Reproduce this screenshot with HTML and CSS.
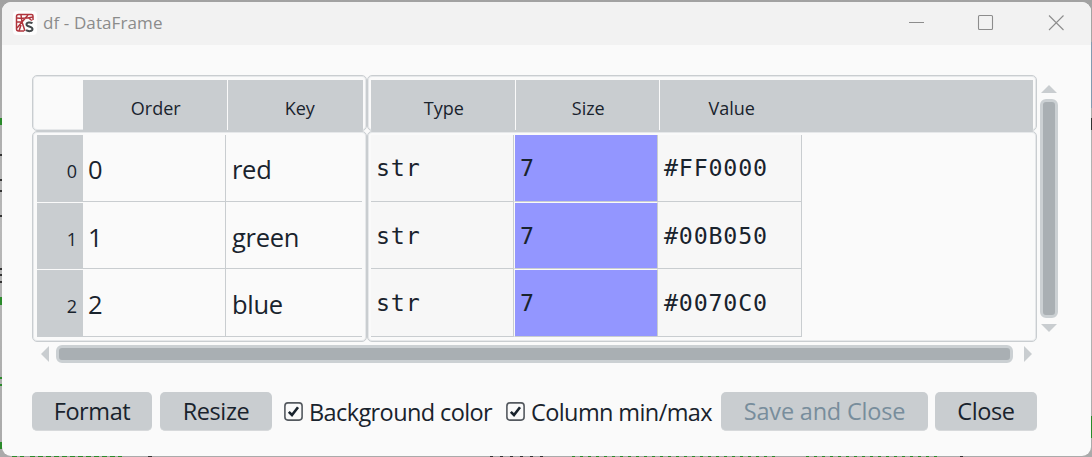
FILE: index.html
```html
<!DOCTYPE html>
<html lang="en">
<head>
<meta charset="utf-8">
<title>df - DataFrame</title>
<link rel="stylesheet" href="styles.css">
</head>
<body>
<div class="desktop">
<main class="window">
  <header class="titlebar">
    <svg class="logo" width="24" height="24" viewBox="0 0 24 24"><rect width="24" height="24" rx="4" fill="#fdfdfd"/><g fill="none" stroke="#b0343c" stroke-width="1.500"><path d="M20 9V5Q20 3.500 18.500 3.500H5.500Q3.500 3.500 3.500 5.500V18Q3.500 20 5.500 20H11"/><path d="M4 7Q12 8 20 6M8 4L9 11L4 17M9 11L15 4M9 11L12 20M6 20L8 14M16 7L19 10M4 11L9 11"/></g><path d="M19.500 12.200C17 10.800 13.500 11.300 13.500 13.400C13.500 15.800 19.500 15.100 19.500 18C19.500 20.500 15.500 20.700 13 19.200" fill="none" stroke="#fff" stroke-width="4"/><path d="M19.500 12.200C17 10.800 13.500 11.300 13.500 13.400C13.500 15.800 19.500 15.100 19.500 18C19.500 20.500 15.500 20.700 13 19.200" fill="none" stroke="#44494c" stroke-width="2"/></svg>
    <h1 class="title">df - DataFrame</h1>
    <svg class="controls" width="158" height="18" viewBox="0 0 158 18" fill="none" stroke="#8d8d8d" stroke-width="1.100"><path d="M1 8.500H16M141 1.500L155.500 16M155.500 1.500L141 16"/><rect x="70.500" y="1.500" width="14" height="14" rx="1"/></svg>
  </header>
  <section class="viewer">
    <div class="frames">
      <div class="frame head head-index">
        <div class="corner"></div><div class="th">Order</div><div class="th key">Key</div>
      </div>
      <div class="frame head head-data">
        <div class="th">Type</div><div class="th">Size</div><div class="th value">Value</div><div class="th last"></div>
      </div>
      <div class="frame body body-index">
        <div class="labels"><div>0</div><div>1</div><div>2</div></div>
        <div class="cells index-cells">
          <div>0</div><div>red</div><div>1</div><div>green</div><div>2</div><div>blue</div>
        </div>
      </div>
      <div class="frame body body-data">
        <div class="cells data-cells">
          <div>str</div><div class="size">7</div><div>#FF0000</div>
          <div>str</div><div class="size">7</div><div>#00B050</div>
          <div>str</div><div class="size">7</div><div>#0070C0</div>
        </div>
      </div>
    </div>
    <div class="scroll vertical"><i class="arrow up"></i><i class="thumb"></i><i class="arrow down"></i></div>
    <div class="scroll horizontal"><i class="arrow left"></i><i class="thumb"></i><i class="arrow right"></i></div>
  </section>
  <footer class="actions">
    <button class="btn format">Format</button>
    <button class="btn resize">Resize</button>
    <label class="check bg"><svg width="19" height="19" viewBox="0 0 19 19" fill="none"><rect x=".9" y=".9" width="17.200" height="17.200" rx="3" stroke="#54595f" stroke-width="1.600"/><path d="M4.800 9.800L8 13L14 5.200" stroke="#19232d" stroke-width="2.600"/></svg><span>Background color</span></label>
    <label class="check minmax"><svg width="19" height="19" viewBox="0 0 19 19" fill="none"><rect x=".9" y=".9" width="17.200" height="17.200" rx="3" stroke="#54595f" stroke-width="1.600"/><path d="M4.800 9.800L8 13L14 5.200" stroke="#19232d" stroke-width="2.600"/></svg><span>Column min/max</span></label>
    <button class="btn save" disabled>Save and Close</button>
    <button class="btn close">Close</button>
  </footer>
</main>
<svg class="fringe" width="1092" height="457" viewBox="0 0 1092 457" fill="none"><path d="M1 118V125M1 377V379M1 384V386M1 442V449M1 297V305" stroke="#2a8a2a" stroke-width="2"/><path d="M1 154V156M1 179V181M1 190V192M1 215V217M1 268V270M1 274V276M1 281V283" stroke="#333" stroke-width="2"/><path d="M12 456.500H24M30 456.500H122" stroke="#2a8a2a" stroke-dasharray="5 3"/><path d="M490 456.500H543" stroke="#333" stroke-dasharray="3 7"/><path d="M572 456.500H780M806 456.500H940" stroke="#2a8a2a" stroke-dasharray="3 5"/><path d="M148 456.500H152M960 456.500H963M1091.500 118V130" stroke="#333"/><path d="M1091.500 42V108" stroke="#829bb0"/><path d="M1091.500 416V438" stroke="#2a8a2a"/></svg>
</div>
</body>
</html>
```
FILE: styles.css
```css
* { box-sizing: border-box; }
body { margin: 0; font-family: "Open Sans", "Noto Sans", sans-serif; color: #19232d; }
.desktop { position: relative; width: 1092px; height: 457px; padding: 2px 1px 1px 2px; background: linear-gradient(#a2a2a2, #b8b8b8 50%, #aaa); overflow: hidden; }
.window { width: 1089px; height: 454px; border-radius: 9px; background: #fafafa; overflow: hidden; }
.fringe { position: absolute; left: 0; top: 0; pointer-events: none; }
.titlebar { height: 43px; background: #f2f2f2; display: flex; align-items: center; padding: 0 25px 2px 11px; }
.logo { flex: none; }
.title { margin: 0 auto 0 6px; font-size: 17px; line-height: 24px; font-weight: 400; letter-spacing: .1px; color: #8b8b8b; white-space: nowrap; }
.viewer { padding: 30px 0 0 30px; display: grid; grid-template: 267px 24px / 1005px 24px; column-gap: 2px; }
.frames { display: grid; grid-template: 56px 211px / 335px 670px; }
.frame { border: 1px solid #c9cdd0; box-shadow: inset 0 0 0 1px #e6e8ea; border-radius: 5px; display: flex; overflow: hidden; }
.head { padding: 4px 3px 0; border-bottom-width: 1px; }
.corner { width: 47px; flex: none; }
.th { width: 144.500px; flex: none; background: #c9cdd0; border-right: 1px solid #fafafa; text-align: center; font-size: 18px; line-height: 50px; padding: 3px 0 0 2px; }
.th.key { flex: 1; width: auto; border-right: 0; padding-left: 9px; }
.th.value { border-right-color: #c9cdd0; padding-left: 0; }
.th.last { flex: 1; width: auto; border-right: 0; }
.body { padding: 3px 3px 0; }
.labels { width: 46px; margin-left: 1px; flex: none; display: grid; grid-template-rows: 68px 67px 68px; }
.labels div { background: #c9cdd0; border-bottom: 1px solid #fafafa; text-align: right; padding: 3px 6px 0 0; font-size: 18px; line-height: 66px; }
.cells { display: grid; grid-template-rows: 67px 67px 68px; height: 202px; white-space: nowrap; }
.cells > div { border-right: 1px solid #c9cdd0; border-bottom: 1px solid #c9cdd0; }
.index-cells { grid-template-columns: 143px 136px; font-size: 25.500px; line-height: 66px; }
.index-cells > div { padding: 1px 0 0 5px; }
.index-cells > div:nth-child(n+3) { padding-top: 2px; }
.index-cells > div:nth-child(2n) { padding-left: 6px; border-right: 0; letter-spacing: -.3px; }
.data-cells { grid-template-columns: 143px 144px 144px; font: 23.300px/67px "DejaVu Sans Mono", monospace; letter-spacing: .8px; }
.data-cells > div { padding-left: 5px; background: #f7f7f7; }
.data-cells > div:nth-child(3n) { padding-left: 6px; }
.data-cells > .size { background: #9396ff; border-left: 1px solid #fafafa; padding-left: 5px; }
.data-cells > .size:nth-child(n+4) { border-top: 1px solid #fafafa; line-height: 65px; }
.data-cells > div:nth-child(-n+3) { line-height: 65px; }
.scroll { display: flex; align-items: center; }
.vertical { flex-direction: column; padding-top: 10px; width: 20px; }
.horizontal { padding-left: 9px; height: 24px; }
.arrow { flex: none; background: #c9cdd0; }
.up, .down { width: 16px; height: 8px; }
.left, .right { width: 8px; height: 16px; }
.up { clip-path: polygon(50% 0, 100% 100%, 0 100%); }
.down { clip-path: polygon(0 0, 100% 0, 50% 100%); }
.left { clip-path: polygon(100% 0, 100% 100%, 0 50%); }
.right { clip-path: polygon(0 0, 100% 50%, 0 100%); }
.thumb { flex: none; background: #a9afb3; border: 3px solid #cbd0d3; border-radius: 6px; }
.vertical .thumb { width: 18px; height: 219px; margin: 6px 0; }
.horizontal .thumb { width: 957px; height: 18px; margin: 0 11px 0 7px; }
.actions { display: flex; align-items: center; height: 38px; margin: 26px 0 0 30px; }
.btn { flex: none; height: 39px; border: 0; border-bottom: 1px solid #d7d9db; border-radius: 5px; padding: 1px 0 0; background: #c9cdd0; color: #19232d; font: 23.500px/36px "Open Sans", sans-serif; letter-spacing: -.4px; white-space: nowrap; }
.format { width: 120px; margin-right: 8px; }
.resize { width: 112px; margin-right: 12px; }
.save { width: 207px; margin-right: 7px; color: #788d9c; letter-spacing: -.2px; }
.close { width: 102px; }
.check { display: flex; align-items: center; width: 222px; flex: none; font-size: 23.500px; line-height: 38px; letter-spacing: -.6px; white-space: nowrap; }
.check svg { flex: none; margin-right: 6px; }
.check span { padding-top: 1px; }
.minmax { width: 215px; }
```
